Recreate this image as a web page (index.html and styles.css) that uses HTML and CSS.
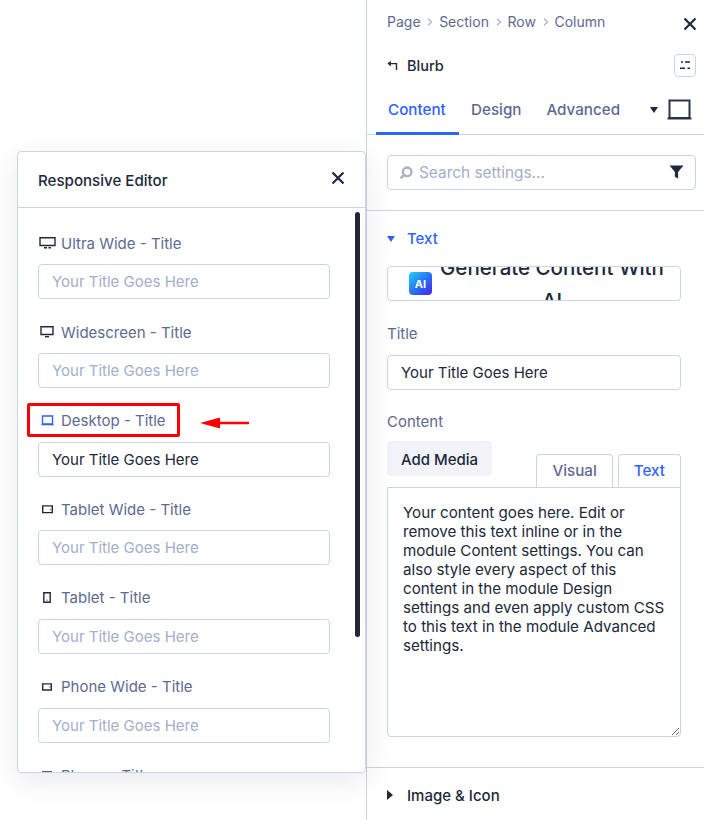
FILE: index.html
```html
<!DOCTYPE html>
<html lang="en">
<head>
<meta charset="utf-8">
<title>Responsive Editor</title>
<link rel="stylesheet" href="styles.css">
</head>
<body>
<div class="page">
  <div class="canvas"></div>
  <aside class="sidebar">
    <div class="crumbs">
      <nav class="crumb-list">
        <span>Page</span><svg class="chev" viewBox="0 0 6 8"><path d="M1 .8 4.6 4 1 7.2"/></svg>
        <span>Section</span><svg class="chev" viewBox="0 0 6 8"><path d="M1 .8 4.6 4 1 7.2"/></svg>
        <span>Row</span><svg class="chev" viewBox="0 0 6 8"><path d="M1 .8 4.6 4 1 7.2"/></svg>
        <span>Column</span>
      </nav>
      <svg class="close" viewBox="0 0 14 14"><path d="M1.5 1.5 12.5 12.5M12.5 1.5 1.5 12.5"/></svg>
    </div>
    <div class="module-row">
      <svg class="back" viewBox="0 0 11 11"><path d="M9.5 10V3.6H2.5"/><path class="fill" d="M0.4 3.6 3.8 0.8V6.4Z"/></svg>
      <span class="module-name">Blurb</span>
      <span class="mini-btn"><svg viewBox="0 0 12 10"><path d="M2 2H4M6 2H11M1 8.2H6M8.5 8.2H11"/></svg></span>
    </div>
    <div class="tabs">
      <span class="tab active">Content</span>
      <span class="tab">Design</span>
      <span class="tab">Advanced</span>
      <span class="device"><i class="caret"></i><svg viewBox="0 0 25 21"><path d="M2.5 1.5H22.5V19H2.5Z"/><path d="M0.5 19.5H24.5"/></svg></span>
    </div>
    <div class="search-wrap">
      <div class="search">
        <svg class="loupe" viewBox="0 0 14 14"><circle cx="8.2" cy="5.8" r="4.3"/><path d="M5 9 1.6 12.4"/></svg>
        <input class="search-input" placeholder="Search settings...">
        <svg class="funnel" viewBox="0 0 14 13"><path d="M0.5 0.5H13.5L8.5 6.5V12.5L5.5 11V6.5Z"/></svg>
      </div>
    </div>
    <section class="group">
      <div class="group-head blue"><i class="tri-down"></i><span>Text</span></div>
      <div class="ai-btn">
        <svg class="ai-logo" viewBox="0 0 23 23"><defs><linearGradient id="aig" x1="0" y1="0" x2="1" y2="1"><stop offset="0" stop-color="#1fd2f5"/><stop offset=".55" stop-color="#2a6cf5"/><stop offset="1" stop-color="#4a22e8"/></linearGradient></defs><rect width="23" height="23" rx="4" fill="url(#aig)"/><text x="11.5" y="16" text-anchor="middle" class="ai-logo-text">AI</text></svg>
        <span class="ai-text">Generate Content With AI</span>
      </div>
      <label class="field-label title-label">Title</label>
      <input class="text-input" value="Your Title Goes Here">
      <label class="field-label content-label">Content</label>
      <div class="editor-bar">
        <span class="media-btn">Add Media</span>
        <div class="editor-tabs">
          <span class="editor-tab">Visual</span>
          <span class="editor-tab blue-text">Text</span>
        </div>
      </div>
      <textarea class="editor">Your content goes here. Edit or remove this text inline or in the module Content settings. You can also style every aspect of this content in the module Design settings and even apply custom CSS to this text in the module Advanced settings.</textarea>
    </section>
    <div class="group-head closed"><i class="tri-right"></i><span>Image &amp; Icon</span></div>
  </aside>

  <div class="panel">
    <header class="panel-head">
      <span class="panel-title">Responsive Editor</span>
      <svg class="panel-close" viewBox="0 0 14 14"><path d="M1.5 1.5 12.5 12.5M12.5 1.5 1.5 12.5"/></svg>
    </header>
    <div class="panel-body">
      <div class="field">
        <div class="field-head"><span class="ico"><svg width="17" height="12" viewBox="0 0 17 12"><path d="M1 .7H16V8.5H1Z"/><path d="M5 10.7H8M9.5 10.7H12"/></svg></span>Ultra Wide - Title</div>
        <input class="text-input" placeholder="Your Title Goes Here">
      </div>
      <div class="field">
        <div class="field-head"><span class="ico"><svg width="14" height="12" viewBox="0 0 14 12"><path d="M1 .7H13V8.5H1Z"/><path d="M5 10.7H9"/></svg></span>Widescreen - Title</div>
        <input class="text-input" placeholder="Your Title Goes Here">
      </div>
      <div class="field">
        <div class="field-head"><span class="ico"><svg width="13" height="11" viewBox="0 0 13 11"><path class="blue-stroke" d="M1.5 1H11.5V9H1.5Z"/><path class="blue-stroke" d="M0.5 9.6H12.5"/></svg></span>Desktop - Title</div>
        <input class="text-input" value="Your Title Goes Here">
      </div>
      <div class="field">
        <div class="field-head"><span class="ico"><svg width="11" height="9" viewBox="0 0 11 9"><path d="M.7.9H10.3V7.6H.7Z"/><path d="M8.6 4.2V4.8"/></svg></span>Tablet Wide - Title</div>
        <input class="text-input" placeholder="Your Title Goes Here">
      </div>
      <div class="field">
        <div class="field-head"><span class="ico"><svg width="8" height="11" viewBox="0 0 8 11"><path d="M.8.7H7.2V10.3H.8Z"/><path d="M4 7.8V8.6"/></svg></span>Tablet - Title</div>
        <input class="text-input" placeholder="Your Title Goes Here">
      </div>
      <div class="field">
        <div class="field-head"><span class="ico"><svg width="10" height="8" viewBox="0 0 10 8"><path d="M.7.9H9.3V7H.7Z"/><path d="M7.8 3.6V4.3"/></svg></span>Phone Wide - Title</div>
        <input class="text-input" placeholder="Your Title Goes Here">
      </div>
      <div class="field">
        <div class="field-head"><span class="ico"><svg width="10" height="8" viewBox="0 0 10 8"><path d="M.7.9H9.3V7H.7Z"/></svg></span>Phone - Title</div>
      </div>
    </div>
    <div class="scroll-thumb"></div>
  </div>

  <div class="highlight"></div>
  <svg class="arrow" viewBox="0 0 50 12"><path d="M20 6H48" /><path class="arrow-head" d="M0 6 20 0.5V11.5Z"/></svg>
</div>
</body>
</html>
```

FILE: styles.css
```css
* { box-sizing: border-box; }
html, body { margin: 0; padding: 0; background: #fff; }
body { font-family: Inter, "Liberation Sans", sans-serif; color: #20293a; font-size: 15px; }
.page { position: relative; width: 704px; height: 820px; overflow: hidden; display: flex; }
.canvas { width: 366px; flex: none; }

.sidebar { flex: 1; min-width: 0; border-left: 1px solid #ccd3e6; display: flex; flex-direction: column; }
.crumbs { flex: none; display: flex; align-items: center; justify-content: space-between; height: 43px; padding: 0 7px 0 20px; }
.crumb-list { display: flex; align-items: center; font-size: 14px; color: #5d6a90; }
.chev { width: 6px; height: 8px; margin: 0 5.9px 0 6.7px; fill: none; stroke: #a8b1c8; stroke-width: 1.2; }
.close { width: 14px; height: 14px; fill: none; stroke: #20293a; stroke-width: 2.2; margin-top: 4px; }
.module-row { flex: none; display: flex; align-items: center; height: 44px; padding: 0 8px 0 20px; }
.back { width: 11px; height: 11px; fill: none; stroke: #20293a; stroke-width: 1.4; margin-right: 9px; }
.back .fill { fill: #20293a; stroke: none; }
.module-name { flex: 1; font-size: 14.5px; font-weight: 500; }
.mini-btn { width: 22px; height: 23px; border: 1px solid #ccd3e6; border-radius: 4px; display: flex; align-items: center; justify-content: center; }
.mini-btn svg { width: 12px; height: 10px; fill: none; stroke: #20293a; stroke-width: 1.6; }

.tabs { flex: none; display: flex; align-items: flex-start; height: 48px; border-bottom: 1px solid #ccd3e6; padding: 0 0 0 9px; position: relative; }
.tab { height: 48px; padding: 14px 12px 0 12px; font-size: 15.2px; font-weight: 500; color: #5d6a90; line-height: 18px; }
.tab:nth-child(2) { padding: 14px 13px 0 12px; }
.tab:nth-child(3) { padding: 14px 0 0 12px; }
.tab.active { color: #2e63ff; border-bottom: 3px solid #2e63ff; width: 83px; }
.device { display: flex; align-items: center; margin-left: auto; margin-right: 12px; margin-top: 12px; gap: 9px; }
.caret { width: 0; height: 0; border-left: 4.5px solid transparent; border-right: 4.5px solid transparent; border-top: 6px solid #20293a; }
.device svg { width: 25px; height: 21px; fill: none; stroke: #2b3548; stroke-width: 2; }

.search-wrap { flex: none; padding: 20px 8px 20px 20px; border-bottom: 1px solid #ccd3e6; }
.search { height: 35px; border: 1px solid #ccd3e6; border-radius: 4px; display: flex; align-items: center; padding: 0 11px 0 11px; }
.loupe { width: 14px; height: 14px; flex: none; fill: none; stroke: #a8b1c8; stroke-width: 2.4; }
.search-input { flex: 1; min-width: 0; border: 0; outline: 0; padding: 0 0 0 6px; font: 400 15.4px Inter, sans-serif; background: transparent; }
.search-input::placeholder, .text-input::placeholder { color: #a3aecb; opacity: 1; }
.funnel { width: 15px; height: 14px; flex: none; fill: #20293a; margin-left: auto; position: relative; top: -1px; }

.group { flex: none; padding: 0 23px 0 20px; height: 557px; border-bottom: 1px solid #ccd3e6; }
.group-head { display: flex; align-items: center; height: 55px; font-size: 15px; font-weight: 500; }
.group-head.blue { color: #2e63ff; }
.group-head.blue span { margin-left: 12px; }
.tri-down { width: 0; height: 0; border-left: 4.5px solid transparent; border-right: 4.5px solid transparent; border-top: 6px solid #2e63ff; }
.closed { flex: none; height: 52px; padding: 2px 0 0 20px; }
.tri-right { width: 0; height: 0; border-top: 5px solid transparent; border-bottom: 5px solid transparent; border-left: 6.5px solid #20293a; margin-right: 14px; }
.ai-btn { position: relative; height: 35px; border: 1px solid #ccd3e6; border-radius: 4px; overflow: hidden; display: flex; align-items: center; justify-content: center; padding: 0 14px 0 50px; }
.ai-logo { position: absolute; left: 21px; top: 5px; width: 23px; height: 23px; }
.ai-logo-text { font: 700 11px Inter, sans-serif; fill: #fff; }
.ai-text { text-align: center; font-size: 20.5px; font-weight: 500; line-height: 33px; color: #20293a; }

.field-label { display: block; font-size: 15px; color: #5d6a90; line-height: 18px; }
.title-label { margin-top: 24px; margin-bottom: 12px; }
.content-label { margin-top: 23px; margin-bottom: 10px; }
.text-input { display: block; width: 100%; height: 35px; border: 1px solid #ccd3e6; border-radius: 4px; padding: 0 13px; font: 400 15px Inter, sans-serif; color: #20293a; outline: 0; background: #fff; }

.editor-bar { display: flex; justify-content: space-between; align-items: flex-end; height: 46px; }
.media-btn { align-self: flex-start; width: 105px; height: 35px; padding-top: 1px; border-radius: 4px; background: #f1f3f8; color: #20293a; font-weight: 500; font-size: 15px; display: flex; align-items: center; justify-content: center; }
.editor-tabs { display: flex; gap: 5px; margin-bottom: -1px; }
.editor-tab { height: 34px; padding: 0 15px; border: 1px solid #ccd3e6; border-bottom: 0; border-radius: 4px 4px 0 0; font-weight: 500; font-size: 15.2px; line-height: 32px; color: #5d6a90; background: #fff; position: relative; }
.blue-text { color: #2e63ff; padding: 0 15px; }
.editor { display: block; width: 100%; height: 250px; border: 1px solid #ccd3e6; border-radius: 0 0 4px 4px; padding: 15px; font: 400 15.15px/19px Inter, sans-serif; color: #20293a; outline: 0; resize: both; position: relative; }

.panel { position: absolute; left: 17px; top: 151px; width: 349px; height: 622px; background: #fff; border: 1px solid #ccd3e6; border-radius: 4px; box-shadow: 0 8px 30px rgba(40, 50, 80, .10); overflow: hidden; display: flex; flex-direction: column; }
.panel-head { flex: none; height: 56px; border-bottom: 1px solid #ccd3e6; display: flex; align-items: center; justify-content: space-between; padding: 0 20px 0 20px; }
.panel-title { font-size: 15.1px; font-weight: 500; color: #20293a; margin-top: 2px; }
.panel-close { width: 14px; height: 14px; fill: none; stroke: #20293a; stroke-width: 2.2; margin-top: -4px; }
.panel-body { flex: 1; min-height: 0; overflow: hidden; padding: 25.4px 35px 0 20px; }
.field { height: 88.65px; }
.field-head { display: flex; align-items: center; height: 20px; margin-bottom: 11px; font-size: 15px; color: #5d6a90; }
.ico { width: 23px; flex: none; display: flex; justify-content: center; padding-right: 5px; }
.ico svg { fill: none; stroke: #20293a; stroke-width: 1.4; }
.ico .blue-stroke { stroke: #2e63ff; }
.scroll-thumb { position: absolute; left: 337px; top: 60px; width: 5px; height: 425px; border-radius: 3px; background: #20293a; }

.highlight { position: absolute; left: 27px; top: 403px; width: 153px; height: 34px; border: 3.5px solid #f00; border-radius: 2px; }
.arrow { position: absolute; left: 200px; top: 417px; width: 50px; height: 12px; fill: none; }
.arrow path { stroke: #f00; stroke-width: 2.5; stroke-linecap: round; }
.arrow .arrow-head { fill: #f00; stroke: none; }
```
